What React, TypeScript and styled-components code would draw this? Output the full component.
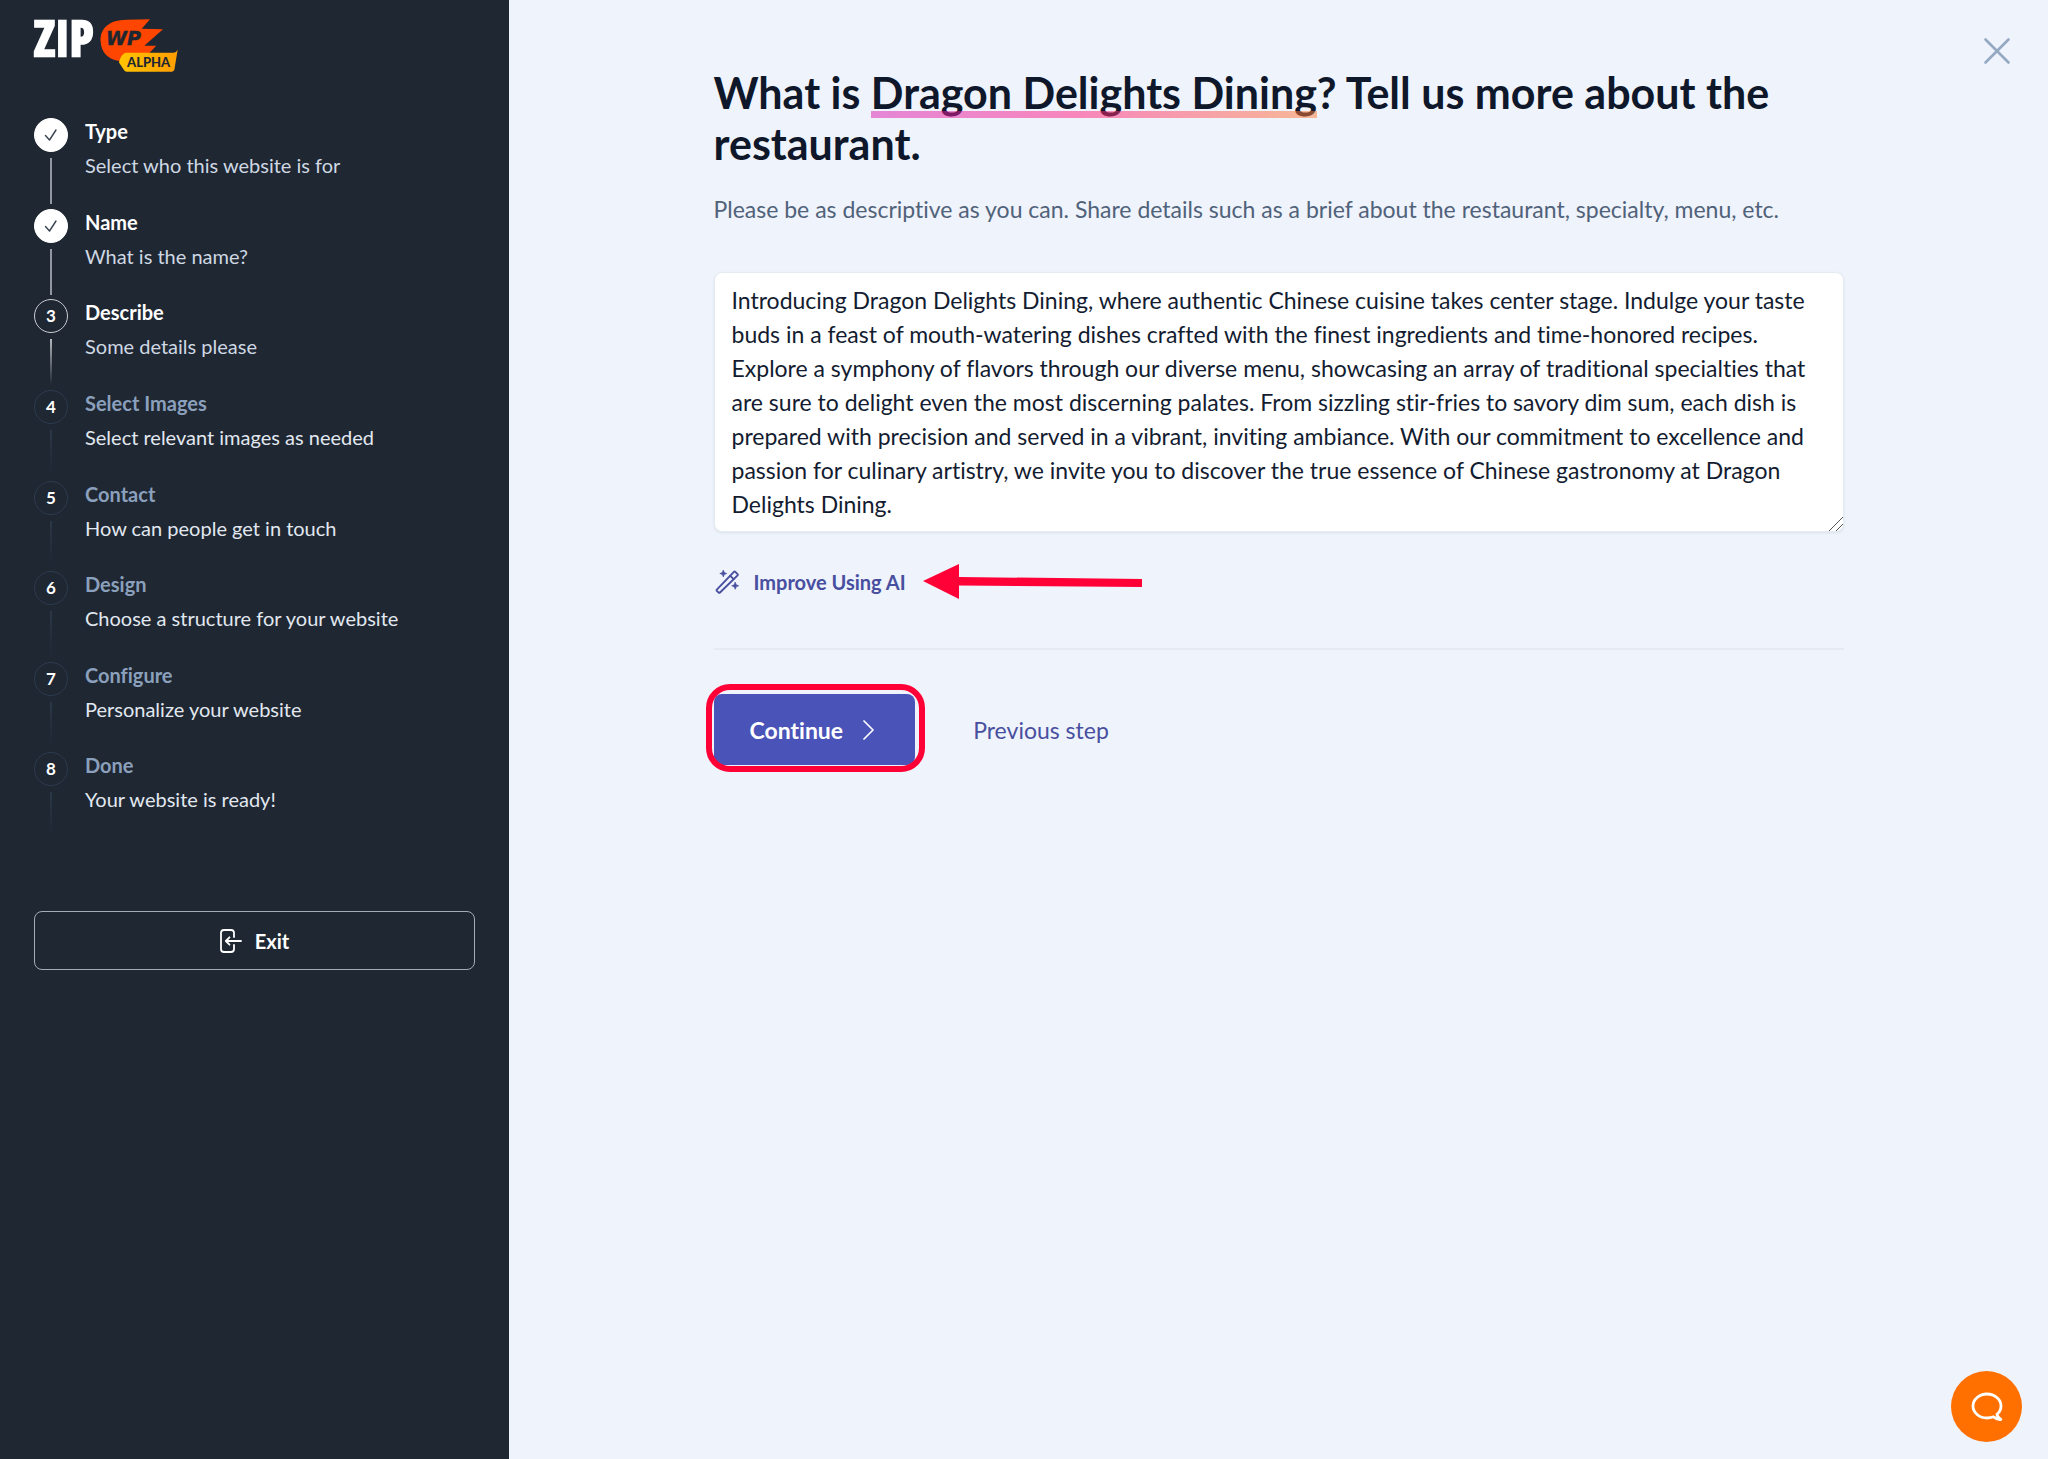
import React from "react";
import styled, { createGlobalStyle, css } from "styled-components";

const color = {
  sidebar: "#1e2732",
  page: "#eff3fb",
  ink: "#0f172a",
  muted: "#4f627a",
  accent: "#484fa0",
  button: "#4a53b8",
  marker: "#ff0037",
};

const GlobalStyle = createGlobalStyle`
  *, *::before, *::after { box-sizing: border-box; }
  body {
    margin: 0;
    background: ${color.page};
    color: ${color.ink};
    font-family: Lato, "Open Sans", sans-serif;
    font-variant-ligatures: none;
  }
  button, textarea { font: inherit; font-variant-ligatures: none; }
  h1, p, ol { margin: 0; padding: 0; }
`;

const Layout = styled.div`
  display: grid;
  grid-template-columns: 509px minmax(0, 1fr);
  min-height: 100vh;
`;

const Sidebar = styled.aside`
  display: flex;
  flex-direction: column;
  padding: 18px 34px;
  background: ${color.sidebar};
  color: #fff;
`;

const LogoLink = styled.a`
  display: block;
  height: 54px;
  margin-bottom: 42px;
`;

const LogoMark = styled.svg`
  display: block;
  overflow: visible;
`;

const StepList = styled.ol`
  display: grid;
  grid-auto-rows: 1fr;
  min-height: 725px;
  list-style: none;
`;

type State = "done" | "current" | "upcoming";

const StepItem = styled.li`
  display: flex;
  gap: 17px;
`;

const StepTrack = styled.div`
  display: flex;
  flex-direction: column;
  align-items: center;
  gap: 6px;
  padding-top: 4px;
`;

const StepMarker = styled.span<{ $state: State }>`
  display: grid;
  place-items: center;
  width: 34px;
  height: 34px;
  border: 1px solid #2c3b50;
  border-radius: 50%;
  font-size: 17px;
  font-weight: 700;
  line-height: 20px;
  ${(p) => p.$state === "done" && css`
    background: #fff;
    border-color: #fff;
  `}
  ${(p) => p.$state === "current" && css`
    border-color: #c9cdd2;
  `}
`;

const lineFill = {
  done: "#92989f",
  current: "linear-gradient(#b4b8bd, rgba(180, 184, 189, 0))",
  upcoming: "linear-gradient(#2b3848, rgba(43, 56, 72, 0))",
};

const StepLine = styled.span<{ $state: State }>`
  width: 2px;
  height: 46px;
  background: ${(p) => lineFill[p.$state]};
`;

const StepTitle = styled.p<{ $state: State }>`
  font-size: 20px;
  font-weight: 700;
  line-height: 34px;
  color: ${(p) => (p.$state === "upcoming" ? "#8ba0bc" : "#fff")};
`;

const StepNote = styled.p<{ $state: State }>`
  font-size: 20px;
  line-height: 34px;
  color: ${(p) => (p.$state === "upcoming" ? "#e2e8f0" : "#cfd8e3")};
`;

const ExitButton = styled.button`
  display: flex;
  align-items: center;
  justify-content: center;
  gap: 13px;
  height: 59px;
  margin-top: 72px;
  border: 1px solid #a4adb7;
  border-radius: 8px;
  background: transparent;
  color: #fff;
  font-size: 20px;
  font-weight: 700;
  cursor: pointer;
`;

const Main = styled.main`
  position: relative;
  padding: 67px 48px;
`;

const Content = styled.div`
  max-width: 1130px;
  margin: 0 auto;
`;

const Heading = styled.h1`
  font-size: 43px;
  font-weight: 700;
  line-height: 51px;
`;

const Highlight = styled.span`
  position: relative;
  white-space: nowrap;
  &::after {
    content: "";
    position: absolute;
    left: 0;
    right: 0;
    bottom: 0;
    height: 7px;
    background: linear-gradient(90deg, #db1db2, #ff1d7f 46%, #ff7f35);
    opacity: 0.51;
  }
`;

const Lead = styled.p`
  margin-top: 23px;
  font-size: 23px;
  line-height: 34px;
  color: ${color.muted};
`;

const Description = styled.textarea`
  display: block;
  width: 100%;
  margin-top: 46px;
  padding: 10px 17px;
  border: 1px solid #e6ebf3;
  border-radius: 8px;
  background: #fff;
  box-shadow: 0 1px 3px rgba(15, 23, 42, 0.08);
  color: #131c30;
  font-size: 23px;
  line-height: 34px;
  overflow: hidden;
  resize: vertical;
  outline: none;
  &::-webkit-scrollbar {
    width: 16px;
    height: 16px;
  }
  &::-webkit-resizer {
    background: linear-gradient(
      135deg,
      transparent 50%,
      #555 51% 54%,
      transparent 55% 74%,
      #555 75% 78%,
      transparent 79%
    );
  }
`;

const ImproveRow = styled.div`
  position: relative;
  display: flex;
  margin-top: 38px;
  padding-bottom: 54px;
  border-bottom: 2px solid #e6eaf2;
`;

const ImproveButton = styled.button`
  display: flex;
  align-items: center;
  gap: 15px;
  padding: 0 0 0 1px;
  border: 0;
  background: none;
  color: ${color.accent};
  font-size: 20px;
  font-weight: 700;
  line-height: 24px;
  cursor: pointer;
`;

const Arrow = styled.svg`
  position: absolute;
  left: 209px;
  top: -6px;
`;

const Actions = styled.div`
  display: flex;
  align-items: center;
  gap: 58px;
  margin-top: 44px;
`;

const Marked = styled.div`
  position: relative;
  &::after {
    content: "";
    position: absolute;
    inset: -10px -10px -7px -8px;
    border: 6px solid ${color.marker};
    border-radius: 24px;
    pointer-events: none;
  }
`;

const ContinueButton = styled.button`
  display: flex;
  align-items: center;
  gap: 16px;
  height: 71px;
  padding: 0 36px;
  border: 0;
  border-radius: 8px;
  background: ${color.button};
  color: #fff;
  font-size: 23px;
  font-weight: 700;
  cursor: pointer;
`;

const PreviousButton = styled.button`
  padding: 0;
  border: 0;
  background: none;
  color: ${color.accent};
  font-size: 23px;
  line-height: 34px;
  cursor: pointer;
`;

const CloseButton = styled.button`
  position: absolute;
  top: 36px;
  right: 36px;
  padding: 0;
  border: 0;
  background: none;
  line-height: 0;
  cursor: pointer;
`;

const ChatButton = styled.button`
  position: fixed;
  right: 26px;
  bottom: 17px;
  display: grid;
  place-items: center;
  width: 71px;
  height: 71px;
  padding: 0;
  border: 0;
  border-radius: 50%;
  background: #ff7000;
  cursor: pointer;
`;

const steps: { title: string; note: string; state: State }[] = [
  { title: "Type", note: "Select who this website is for", state: "done" },
  { title: "Name", note: "What is the name?", state: "done" },
  { title: "Describe", note: "Some details please", state: "current" },
  { title: "Select Images", note: "Select relevant images as needed", state: "upcoming" },
  { title: "Contact", note: "How can people get in touch", state: "upcoming" },
  { title: "Design", note: "Choose a structure for your website", state: "upcoming" },
  { title: "Configure", note: "Personalize your website", state: "upcoming" },
  { title: "Done", note: "Your website is ready!", state: "upcoming" },
];

const description =
  "Introducing Dragon Delights Dining, where authentic Chinese cuisine takes center stage. Indulge your taste buds in a feast of mouth-watering dishes crafted with the finest ingredients and time-honored recipes. Explore a symphony of flavors through our diverse menu, showcasing an array of traditional specialties that are sure to delight even the most discerning palates. From sizzling stir-fries to savory dim sum, each dish is prepared with precision and served in a vibrant, inviting ambiance. With our commitment to excellence and passion for culinary artistry, we invite you to discover the true essence of Chinese gastronomy at Dragon Delights Dining.";

const Logo = () => (
  <LogoMark width="144" height="54" viewBox="0 0 144 54" aria-hidden="true">
    <defs>
      <linearGradient id="badge" x1="0" x2="1">
        <stop offset="0" stopColor="#ffc400" />
        <stop offset="1" stopColor="#ff9d00" />
      </linearGradient>
    </defs>
    <text x="0" y="38" fill="#fff" stroke="#fff" strokeWidth="2.4" fontFamily="'Open Sans Condensed', 'Open Sans', sans-serif" fontWeight="800" fontSize="49">ZIP</text>
    <path d="M116 1.2 92 1.8C76 2 66.5 10 66.5 22c0 12 8 20 19 21l28-6 8.700-9.300H110.300L129 11.300l-21.300-.6Z" fill="#ff4600" />
    <text x="72" y="27" fill={color.sidebar} stroke={color.sidebar} strokeWidth=".5" fontFamily="'DejaVu Sans', sans-serif" fontWeight="700" fontStyle="italic" fontSize="19">WP</text>
    <path d="M91.500 34.700H139c2.500 0 3.500-1 4.700-3.200L140.500 51c-.3 2-1.500 2.700-3 2.700H93c-1.500 0-2.300-.5-3-1.700L85 44.500c1-4 2.500-8 6.500-9.800Z" fill="url(#badge)" />
    <text x="93" y="49" fill={color.sidebar} fontFamily="Lato, sans-serif" fontWeight="900" fontSize="13">ALPHA</text>
  </LogoMark>
);

const Check = () => (
  <svg width="14" height="14" viewBox="0 0 14 14" fill="none" stroke="#3a4350" strokeWidth="1.4" strokeLinecap="round" strokeLinejoin="round" aria-hidden="true">
    <path d="m1.500 7.500 4 4.500L12 2" />
  </svg>
);

const ExitIcon = () => (
  <svg width="22" height="24" viewBox="0 0 22 24" fill="none" stroke="#fff" strokeWidth="1.8" strokeLinecap="round" strokeLinejoin="round" aria-hidden="true">
    <path d="M14 8V4a3 3 0 0 0-3-3H4a3 3 0 0 0-3 3v16a3 3 0 0 0 3 3h7a3 3 0 0 0 3-3v-4" />
    <path d="M21 12H6M9.500 8.300 5.800 12l3.700 3.700" />
  </svg>
);

const WandIcon = () => (
  <svg width="24" height="24" viewBox="0 0 24 24" fill="none" stroke={color.accent} strokeWidth="1.900" strokeLinecap="round" strokeLinejoin="round" aria-hidden="true">
    <path d="M1.800 19.700 18.900 1.900a1 1 0 0 1 1.400 0L22.600 4.200a.8.800 0 0 1 0 1.200L5 22.500a1 1 0 0 1-1.400 0L1.800 20.900a.8.800 0 0 1 0-1.200Z" />
    <path d="m15.300 5.800 3.300 3.300" />
    <path d="M8.300 0 9.300 2.500 11.800 3.500 9.300 4.500 8.300 7 7.300 4.500 4.800 3.500 7.300 2.500ZM20.200 12.300l1.100 2.500 2.400 1-2.400 1-1.100 2.500-1.100-2.500-2.400-1 2.400-1Z" fill={color.accent} stroke={color.accent} strokeWidth=".6" />
  </svg>
);

export default function App() {
  return (
    <Layout>
      <GlobalStyle />
      <Sidebar>
        <LogoLink href="#" aria-label="ZipWP Alpha">
          <Logo />
        </LogoLink>
        <StepList>
          {steps.map(({ title, note, state }, i) => (
            <StepItem key={title} aria-current={state === "current" ? "step" : undefined}>
              <StepTrack>
                <StepMarker $state={state}>{state === "done" ? <Check /> : i + 1}</StepMarker>
                <StepLine $state={state} />
              </StepTrack>
              <div>
                <StepTitle $state={state}>{title}</StepTitle>
                <StepNote $state={state}>{note}</StepNote>
              </div>
            </StepItem>
          ))}
        </StepList>
        <ExitButton type="button">
          <ExitIcon />
          Exit
        </ExitButton>
      </Sidebar>
      <Main>
        <CloseButton type="button" aria-label="Close">
          <svg width="30" height="30" viewBox="0 0 30 30" stroke="#94a8c2" strokeWidth="2.600" strokeLinecap="round" aria-hidden="true">
            <path d="m3.500 3.500 23 23M26.500 3.500l-23 23" />
          </svg>
        </CloseButton>
        <Content>
          <Heading>
            What is <Highlight>Dragon Delights Dining</Highlight>? Tell us more about the restaurant.
          </Heading>
          <Lead id="lead">
            Please be as descriptive as you can. Share details such as a brief about the restaurant, specialty, menu, etc.
          </Lead>
          <Description rows={7} aria-label="Restaurant description" aria-describedby="lead" spellCheck={false} defaultValue={description} />
          <ImproveRow>
            <ImproveButton type="button">
              <WandIcon />
              Improve Using AI
            </ImproveButton>
            <Arrow width="219" height="36" viewBox="0 0 219 36" fill={color.marker} aria-hidden="true">
              <path d="M0 17 36 0V13L219 15v8L36 21.500V35Z" />
            </Arrow>
          </ImproveRow>
          <Actions>
            <Marked>
              <ContinueButton type="button">
                Continue
                <svg width="20" height="20" viewBox="0 0 20 20" fill="none" stroke="#fff" strokeWidth="1.700" strokeLinecap="round" strokeLinejoin="round" aria-hidden="true">
                  <path d="m5 1 9 9-9 9" />
                </svg>
              </ContinueButton>
            </Marked>
            <PreviousButton type="button">Previous step</PreviousButton>
          </Actions>
        </Content>
      </Main>
      <ChatButton type="button" aria-label="Open chat">
        <svg width="32" height="29" viewBox="0 0 32 29" fill="none" stroke="#fff" strokeWidth="2.800" strokeLinejoin="round" aria-hidden="true">
          <path d="M22.500 24.800C20.600 25.500 18.400 26 16 26 8.300 26 2 20.600 2 14S8.300 2 16 2s14 5.400 14 12c0 3.300-1.500 6.200-4 8.300 0 2.200 1.500 3.500 3.800 5.200-2.800.2-5.300-.7-7.300-2.700Z" />
        </svg>
      </ChatButton>
    </Layout>
  );
}
